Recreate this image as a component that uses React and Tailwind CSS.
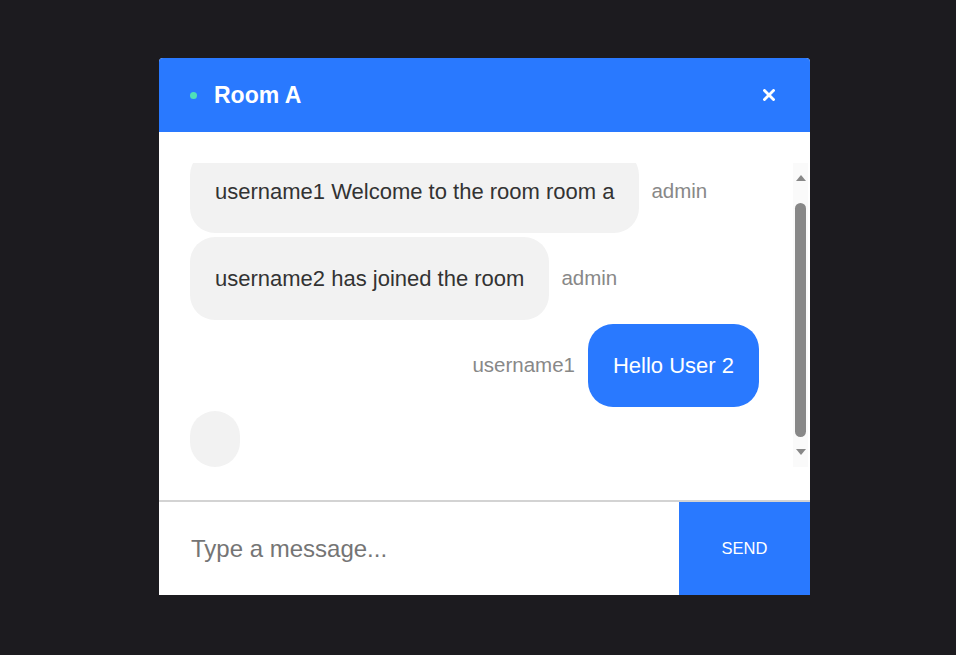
import { useEffect, useRef } from 'react';

const messages = [
    { text: 'username1 Welcome to the room room a', user: 'admin', mine: false },
    { text: 'username2 has joined the room', user: 'admin', mine: false },
    { text: 'Hello User 2', user: 'username1', mine: true },
    { text: '', user: '', mine: false },
];

const Message = ({ msg }) => {
    if (msg.mine) {
        return (
            <div className="flex items-center justify-end gap-[13px]">
                <span className="text-[20.5px] text-[#888]">{msg.user}</span>
                <div className="rounded-[25px] bg-[#2979ff] px-[25px] py-[28px] text-[22px] leading-[27px] text-white">
                    {msg.text}
                </div>
            </div>
        );
    }
    return (
        <div className="flex items-center gap-[12px]">
            <div className="min-h-[56px] min-w-[50px] rounded-[25px] bg-[#f2f2f2] px-[25px] py-[28px] text-[22px] leading-[27px] text-[#333]">
                {msg.text}
            </div>
            {msg.user && <span className="text-[20.5px] text-[#888]">{msg.user}</span>}
        </div>
    );
};

// drawn scrollbar, the headless browser hides the real one
const ScrollBar = () => (
    <div className="flex w-[15px] shrink-0 flex-col items-center bg-[#fafafa]">
        <div className="flex h-[30px] items-center justify-center">
            <svg width="10" height="6" viewBox="0 0 10 6">
                <path d="M5 0 L10 6 L0 6 Z" fill="#888" />
            </svg>
        </div>
        <div className="mt-[10px] h-[235px] w-[11px] rounded-full bg-[#888]" />
        <div className="mt-auto flex h-[30px] items-center justify-center">
            <svg width="10" height="6" viewBox="0 0 10 6">
                <path d="M0 0 L10 0 L5 6 Z" fill="#888" />
            </svg>
        </div>
    </div>
);

const App = () => {
    const listRef = useRef(null);

    useEffect(() => {
        if (listRef.current) {
            listRef.current.scrollTop = listRef.current.scrollHeight;
        }
    }, []);

    return (
        <div
            className="min-h-screen bg-[#1c1b1f] pt-[58px]"
            style={{ fontFamily: '"Liberation Sans", Arial, sans-serif' }}
        >
            <div className="ml-[159px] flex h-[537px] w-[651px] flex-col overflow-hidden rounded-t-[4px] bg-white">
                <div className="flex h-[74px] shrink-0 items-center bg-[#2979ff] pl-[31px] pr-[34px]">
                    <span className="h-[7px] w-[7px] rounded-full bg-[#4fe0b8]" />
                    <h2 className="ml-[17px] text-[23px] font-bold text-white">Room A</h2>
                    <button className="ml-auto flex h-[14px] w-[14px] items-center justify-center">
                        <svg width="12" height="12" viewBox="0 0 12 12">
                            <path d="M1.5 1.5 L10.5 10.5 M10.5 1.5 L1.5 10.5" stroke="white" strokeWidth="2.8" strokeLinecap="square" />
                        </svg>
                    </button>
                </div>

                <div className="flex h-[368px] shrink-0 flex-col pt-[31px]">
                    <div className="ml-[31px] mr-[2px] flex h-[304px]">
                        <div ref={listRef} className="flex-1 overflow-hidden pr-[34px]">
                            <div className="flex flex-col gap-[4px] pt-[33px]">
                                {messages.map((m, i) => (
                                    <Message key={i} msg={m} />
                                ))}
                            </div>
                        </div>
                        <ScrollBar />
                    </div>
                </div>

                <div className="flex h-[95px] shrink-0 border-t-2 border-[#d3d3d3]">
                    <input
                        autoFocus
                        placeholder="Type a message..."
                        className="min-w-0 flex-1 pl-[32px] text-[24px] text-[#333] caret-black outline-none placeholder:text-[#757575]"
                    />
                    <button className="w-[131px] bg-[#2979ff] text-[16.5px] text-white">SEND</button>
                </div>
            </div>
        </div>
    );
};

export default App;
